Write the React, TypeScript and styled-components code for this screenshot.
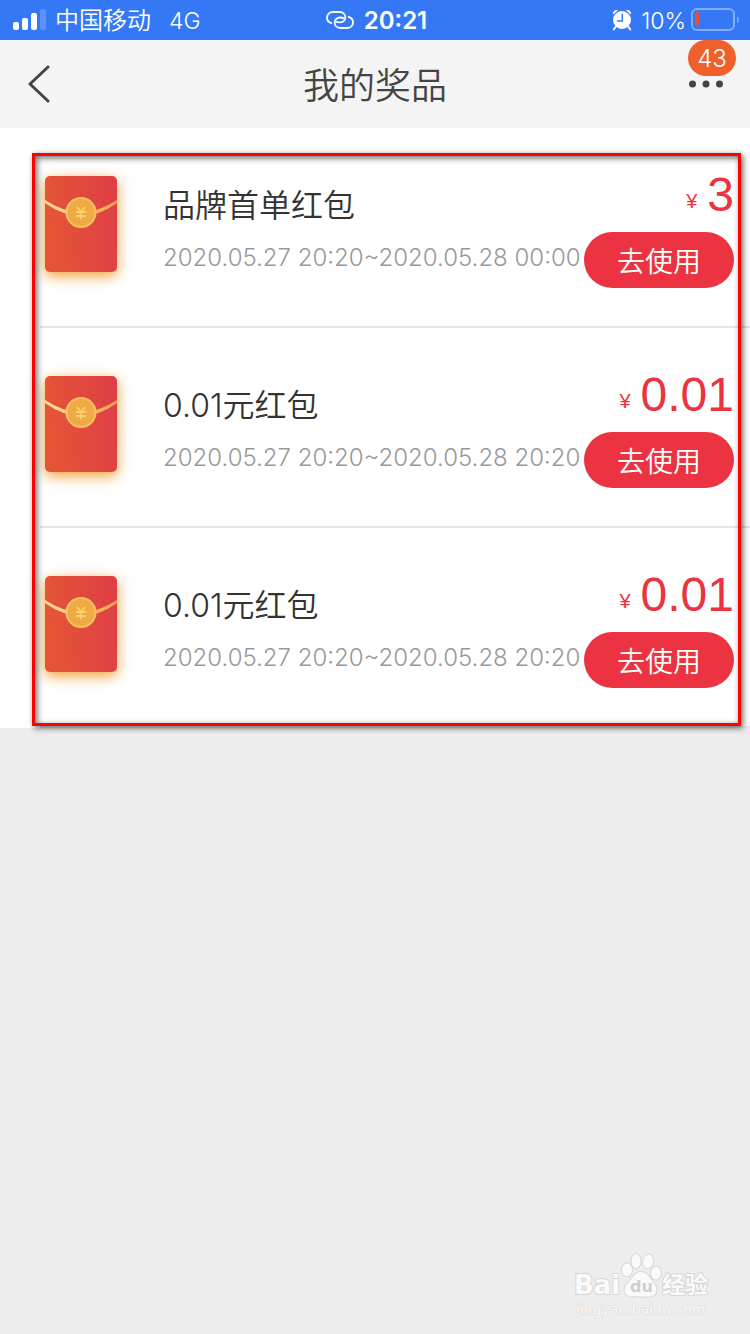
import React from "react";
import styled, { createGlobalStyle } from "styled-components";

const GlobalStyle = createGlobalStyle`
  *, *::before, *::after { box-sizing: border-box; }
  body {
    margin: 0;
    background: #ededed;
    font-family: Inter, "Noto Sans CJK SC", sans-serif;
    color: #333;
  }
`;

const Page = styled.div`
  display: flex;
  flex-direction: column;
  min-height: 100vh;
`;

const StatusBar = styled.div`
  display: grid;
  grid-template-columns: 1fr auto 1fr;
  align-items: center;
  height: 40px;
  padding: 0 10px 0 13px;
  background: #3478f6;
  color: #fff;
  font-size: 24px;
  line-height: 38px;
  white-space: nowrap;
`;

const StatusGroup = styled.div<{ $end?: boolean }>`
  display: flex;
  align-items: center;
  justify-content: ${(p) => (p.$end ? "flex-end" : "flex-start")};
`;

const StatusText = styled.span`
  padding-top: 2px;
`;

const Carrier = styled(StatusText)`
  margin: 0 18px 0 9px;
  font-weight: 350;
`;

const Network = styled(StatusText)`
  font-size: 23px;
  font-weight: 350;
`;

const Clock = styled(StatusText)`
  margin-left: 10px;
  font-weight: 600;
`;

const BatteryLevel = styled(StatusText)`
  margin: 0 5px 0 9px;
  font-size: 23px;
  font-weight: 350;
`;

const NavBar = styled.header`
  display: grid;
  grid-template-columns: 80px 1fr 80px;
  align-items: center;
  height: 88px;
  background: #f4f4f4;
`;

const Title = styled.h1`
  margin: 0;
  padding-top: 4px;
  text-align: center;
  font-size: 36px;
  font-weight: 350;
  line-height: 48px;
  color: #444;
`;

const NavButton = styled.button<{ $end?: boolean }>`
  position: relative;
  display: flex;
  align-items: center;
  justify-content: ${(p) => (p.$end ? "flex-end" : "flex-start")};
  height: 88px;
  padding: ${(p) => (p.$end ? "0 27px 0 0" : "0 0 0 27px")};
  border: 0;
  background: none;
`;

const Badge = styled.span`
  position: absolute;
  top: 0;
  right: 14px;
  width: 48px;
  height: 36px;
  border-radius: 18px;
  background: #f0602b;
  color: #fff;
  font: 300 24px/38px Inter, sans-serif;
  text-align: center;
`;

const PrizeSection = styled.main`
  position: relative;
  background: #fff;
`;

const PrizeList = styled.ul`
  margin: 0;
  padding: 0 0 0 40px;
  list-style: none;
`;

const PrizeRow = styled.li`
  display: flex;
  align-items: flex-start;
  height: 200px;
  padding: 48px 16px 0 5px;
  border-bottom: 2px solid #e6e6e6;
`;

const Envelope = styled.svg`
  flex: none;
  width: 72px;
  height: 96px;
  overflow: visible;
  filter: drop-shadow(0 4px 7px rgba(236, 150, 30, 0.9));
`;

const PrizeText = styled.div`
  flex: 1;
  min-width: 0;
  padding: 10px 0 0 46px;
  white-space: nowrap;
`;

const PrizeName = styled.h2`
  margin: 0 0 12px;
  font-size: 32px;
  font-weight: 350;
  line-height: 40px;
`;

const PrizePeriod = styled.p`
  margin: 0;
  font-size: 24px;
  font-weight: 350;
  line-height: 40px;
  color: #999;
`;

const PrizeAction = styled.div`
  display: flex;
  flex: none;
  flex-direction: column;
  align-items: flex-end;
  gap: 18px;
`;

const Price = styled.div`
  display: flex;
  align-items: center;
  gap: 10px;
  height: 38px;
  color: #ec3341;
  font-family: "Liberation Sans", Arial, sans-serif;
`;

const Currency = styled.span`
  padding-top: 12px;
  font-size: 20px;
  line-height: 24px;
`;

const Amount = styled.span`
  font-size: 48px;
  line-height: 38px;
`;

const UseButton = styled.button`
  width: 150px;
  height: 56px;
  padding: 0;
  border: 0;
  border-radius: 28px;
  background: #ec3341;
  color: #fff;
  font-family: "Noto Sans CJK SC", sans-serif;
  font-size: 28px;
  font-weight: 350;
  line-height: 56px;
`;

const Highlight = styled.div`
  position: absolute;
  inset: 25px 9px 2px 32px;
  border: 3px solid #f00;
  box-shadow: 2px 2px 6px rgba(0, 0, 0, 0.6), inset 2px 2px 6px rgba(0, 0, 0, 0.6);
  pointer-events: none;
`;

const Footer = styled.footer`
  display: flex;
  justify-content: flex-end;
  margin-top: auto;
  padding: 0 36px 12px 0;
`;

const prizes = [
  { name: "品牌首单红包", period: "2020.05.27 20:20~2020.05.28 00:00", amount: "3" },
  { name: "0.01元红包", period: "2020.05.27 20:20~2020.05.28 20:20", amount: "0.01" },
  { name: "0.01元红包", period: "2020.05.27 20:20~2020.05.28 20:20", amount: "0.01" },
];

function SignalIcon() {
  return (
    <svg width="33" height="22" viewBox="0 0 33 22" fill="#fff">
      <rect x="0" y="13" width="6" height="8" rx="2" />
      <rect x="9" y="9" width="6" height="12" rx="2" />
      <rect x="18" y="4" width="6" height="17" rx="2" />
      <rect x="27" y="0" width="6" height="21" rx="2" opacity="0.2" />
    </svg>
  );
}

function HotspotIcon() {
  return (
    <svg width="28" height="18" viewBox="0 0 28 18" fill="none" stroke="#fff" strokeWidth="1.8" strokeLinecap="round">
      <path d="M5.400 12.200C2.800 11.400 1 9.400 1 6.800 1 3.400 3.400 1 7 1H13.500C17 1 19.300 3.400 19.300 6.300 19.300 9.400 17 11.400 13.800 11.400 12.400 11.400 11.300 11.200 10.400 10.700" />
      <path d="M22.600 5.800C25.200 6.600 27 8.600 27 11.200 27 14.600 24.600 17 21 17H14.500C11 17 8.700 14.600 8.700 11.700 8.700 8.600 11 6.500 14.200 6.500 15.600 6.500 16.700 6.800 17.600 7.300" />
    </svg>
  );
}

function AlarmIcon() {
  return (
    <svg width="20" height="22" viewBox="0 0 20 22">
      <circle cx="10" cy="11" r="9" fill="#fff" />
      <path d="M1 5.500C.4 2.500 3.200.2 6 1.300L1.800 5M19 5.500C19.600 2.500 16.800.2 14 1.300L18.200 5" fill="#fff" />
      <path d="M3.500 18 1.800 20.400M16.500 18 18.200 20.400" stroke="#fff" strokeWidth="2" strokeLinecap="round" />
      <path d="M10.300 5.500V12H5.500" fill="none" stroke="#3478f6" strokeWidth="1.500" strokeLinecap="round" />
    </svg>
  );
}

function BatteryIcon() {
  return (
    <svg width="49" height="24" viewBox="0 0 49 24">
      <rect x="1" y="1" width="42" height="21" rx="5" fill="none" stroke="#82adfa" strokeWidth="2" />
      <path d="M46 8.500C48.500 9.500 48.500 14 46 15Z" fill="#82adfa" />
      <rect x="4" y="4" width="4" height="14" rx="2" fill="#eb4d3d" />
    </svg>
  );
}

function RedEnvelope({ id }: { id: string }) {
  return (
    <Envelope viewBox="0 0 72 96" aria-hidden="true">
      <defs>
        <linearGradient id={id} x1="0" y1="0.200" x2="1" y2="0">
          <stop offset="0" stopColor="#e45536" />
          <stop offset="1" stopColor="#df3d48" />
        </linearGradient>
        <linearGradient id={id + "-band"} x1="0" x2="1">
          <stop offset="0" stopColor="#ffe1a0" />
          <stop offset="0.300" stopColor="#f8cb80" />
          <stop offset="1" stopColor="#f3a44e" />
        </linearGradient>
      </defs>
      <rect width="72" height="96" rx="5" fill={`url(#${id})`} />
      <path d="M0 24Q36 48 72 24V27Q36 53 0 27Z" fill={`url(#${id}-band)`} />
      <circle cx="36" cy="36.500" r="14.500" fill="#efaa45" stroke="#f6c160" strokeWidth="2" />
      <path d="M32 31 36 36 40 31M31 36H41M31 40H41M36 36V43" fill="none" stroke="#f9d16a" strokeWidth="1.800" />
    </Envelope>
  );
}

function Watermark() {
  return (
    <svg width="140" height="70" viewBox="0 0 140 70" role="img" aria-label="Baidu 经验">
      <g fill="#fafafa" stroke="#d7d7d7" strokeWidth="2" paintOrder="stroke" strokeLinejoin="round">
        <text x="0" y="42" fontFamily="DejaVu Sans" fontWeight="700" fontSize="26">Bai</text>
        <ellipse cx="53" cy="18" rx="5" ry="6.500" />
        <ellipse cx="62" cy="9" rx="4.500" ry="7" />
        <ellipse cx="74" cy="9.500" rx="5" ry="7" transform="rotate(8 74 9.500)" />
        <ellipse cx="82" cy="21" rx="5" ry="6.500" />
        <path d="M67 20C73 20 75 25 79 30 84 35 84 44 76 44.500 70 45 64 44 58 44.500 49 44.500 49 36 54 31 59 26 61 20 67 20Z" />
        <text x="88" y="41" fontFamily="Noto Sans CJK SC" fontWeight="700" fontSize="23">经验</text>
        <text x="2" y="62" fontFamily="DejaVu Sans" fontSize="14" strokeWidth="1">jingyan.baidu.com</text>
      </g>
      <text x="56" y="40" fill="#cfcfcf" fontFamily="DejaVu Sans" fontWeight="700" fontSize="16">du</text>
    </svg>
  );
}

export default function App() {
  return (
    <Page>
      <GlobalStyle />
      <StatusBar>
        <StatusGroup>
          <SignalIcon />
          <Carrier>中国移动</Carrier>
          <Network>4G</Network>
        </StatusGroup>
        <StatusGroup>
          <HotspotIcon />
          <Clock>20:21</Clock>
        </StatusGroup>
        <StatusGroup $end>
          <AlarmIcon />
          <BatteryLevel>10%</BatteryLevel>
          <BatteryIcon />
        </StatusGroup>
      </StatusBar>
      <NavBar>
        <NavButton aria-label="返回">
          <svg width="24" height="38" viewBox="0 0 24 38" fill="none" stroke="#444" strokeWidth="3" strokeLinecap="round" strokeLinejoin="round">
            <path d="M21 2 3 19 21 36" />
          </svg>
        </NavButton>
        <Title>我的奖品</Title>
        <NavButton $end aria-label="更多">
          <svg width="34" height="8" viewBox="0 0 34 8" fill="#444">
            <circle cx="3.500" cy="4" r="3.500" />
            <circle cx="17" cy="4" r="3.500" />
            <circle cx="30.500" cy="4" r="3.500" />
          </svg>
          <Badge>43</Badge>
        </NavButton>
      </NavBar>
      <PrizeSection>
        <PrizeList>
          {prizes.map((prize, i) => (
            <PrizeRow key={i}>
              <RedEnvelope id={`envelope-${i}`} />
              <PrizeText>
                <PrizeName>{prize.name}</PrizeName>
                <PrizePeriod>{prize.period}</PrizePeriod>
              </PrizeText>
              <PrizeAction>
                <Price>
                  <Currency>¥</Currency>
                  <Amount>{prize.amount}</Amount>
                </Price>
                <UseButton>去使用</UseButton>
              </PrizeAction>
            </PrizeRow>
          ))}
        </PrizeList>
        <Highlight />
      </PrizeSection>
      <Footer>
        <Watermark />
      </Footer>
    </Page>
  );
}
